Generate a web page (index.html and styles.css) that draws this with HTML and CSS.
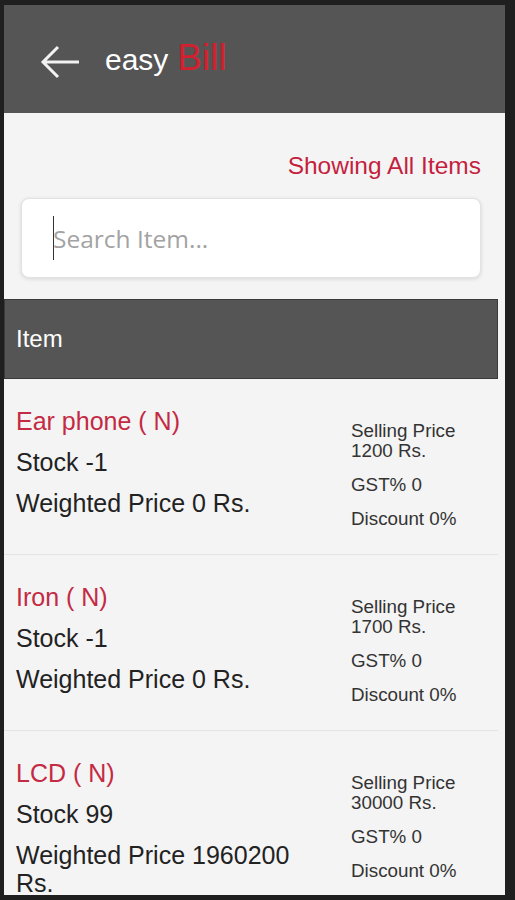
FILE: index.html
```html
<!DOCTYPE html>
<html lang="en">
<head>
<meta charset="utf-8">
<title>easy Bill - Items</title>
<link rel="stylesheet" href="styles.css">
</head>
<body>
<div class="screen">
  <header class="appbar">
    <svg class="back" width="40" height="34" viewBox="0 0 40 34" aria-label="Back">
      <path d="M4 17 H40 M19 2 L4 17 L19 32" fill="none" stroke="#f2f2f2" stroke-width="3" stroke-linecap="butt" stroke-linejoin="miter"/>
    </svg>
    <h1 class="brand"><span class="brand-easy">easy</span> <span class="brand-bill">Bill</span></h1>
  </header>

  <section class="toolbar">
    <p class="filter-label">Showing All Items</p>
    <div class="search" role="searchbox">
      <span class="caret"></span><span class="placeholder">Search Item...</span>
    </div>
  </section>

  <div class="table-head">Item</div>

  <ul class="items">
    <li class="item">
      <div class="item-main">
        <p class="item-name">Ear phone ( N)</p>
        <p>Stock -1</p>
        <p>Weighted Price 0 Rs.</p>
      </div>
      <div class="item-side">
        <p>Selling Price<br>1200 Rs.</p>
        <p>GST% 0</p>
        <p>Discount 0%</p>
      </div>
    </li>
    <li class="item">
      <div class="item-main">
        <p class="item-name">Iron ( N)</p>
        <p>Stock -1</p>
        <p>Weighted Price 0 Rs.</p>
      </div>
      <div class="item-side">
        <p>Selling Price<br>1700 Rs.</p>
        <p>GST% 0</p>
        <p>Discount 0%</p>
      </div>
    </li>
    <li class="item">
      <div class="item-main">
        <p class="item-name">LCD ( N)</p>
        <p>Stock 99</p>
        <p>Weighted Price 1960200 Rs.</p>
      </div>
      <div class="item-side">
        <p>Selling Price<br>30000 Rs.</p>
        <p>GST% 0</p>
        <p>Discount 0%</p>
      </div>
    </li>
  </ul>
</div>
</body>
</html>
```
FILE: styles.css
```css
html, body {
  margin: 0;
  padding: 0;
  background: #1f1f1f;
}

body {
  font-family: "Liberation Sans", Arial, sans-serif;
}

.screen {
  margin: 5px 10px 5px 4px;
  height: 890px;
  background: #f4f4f4;
  overflow: hidden;
}

.appbar {
  height: 108px;
  box-sizing: border-box;
  background: #555555;
  display: flex;
  align-items: center;
  padding: 6px 0 0 35px;
}

.back {
  display: block;
  flex: none;
}

.brand {
  margin: 0 0 10px 26px;
  font-weight: normal;
  line-height: 1;
  white-space: nowrap;
}

.brand-easy {
  font-size: 30px;
  color: #ffffff;
}

.brand-bill {
  font-size: 37px;
  color: #d3202f;
}

.toolbar {
  padding: 39px 24px 21px 17px;
}

.filter-label {
  margin: 0;
  text-align: right;
  font-size: 24.5px;
  line-height: 28px;
  color: #c41f3e;
}

.search {
  margin-top: 18px;
  height: 80px;
  box-sizing: border-box;
  background: #ffffff;
  border: 1px solid #e2e2e2;
  border-radius: 8px;
  box-shadow: 0 1px 4px rgba(0, 0, 0, 0.12);
  display: flex;
  align-items: center;
  padding-left: 31px;
}

.caret {
  display: inline-block;
  width: 1px;
  height: 44px;
  background: #333333;
  margin-right: -1px;
}

.placeholder {
  font-family: "Open Sans", "Liberation Sans", sans-serif;
  font-size: 24.5px;
  color: #a3a3a3;
}

.table-head {
  margin-right: 7px;
  height: 80px;
  box-sizing: border-box;
  background: #555555;
  border: 1px solid #3a3a3a;
  display: flex;
  align-items: center;
  padding-left: 11px;
  font-size: 24px;
  color: #ffffff;
}

.items {
  list-style: none;
  margin: 0 7px 0 0;
  padding: 0;
}

.item {
  height: 176px;
  box-sizing: border-box;
  border-bottom: 1px solid #e3e3e3;
  padding: 28px 0 0 12px;
  display: grid;
  grid-template-columns: 300px 147px;
  column-gap: 35px;
  align-items: start;
}

.item-main p {
  margin: 0 0 13px;
  font-size: 25px;
  line-height: 28px;
  color: #222222;
}

.item-main .item-name {
  color: #c42a43;
}

.item-side {
  padding-top: 14px;
}

.item-side p {
  margin: 0 0 14px;
  font-size: 18.8px;
  line-height: 20px;
  color: #333333;
}
```
